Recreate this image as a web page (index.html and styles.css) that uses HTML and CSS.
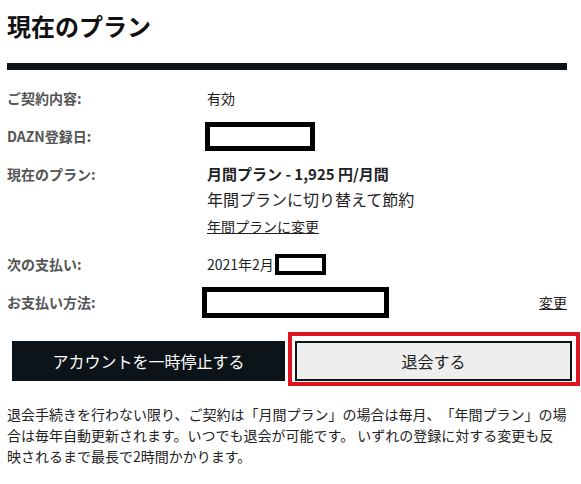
FILE: index.html
```html
<!DOCTYPE html>
<html lang="ja">
<head>
  <meta charset="UTF-8" />
  <meta name="viewport" content="width=device-width, initial-scale=1.0"/>
  <title>現在のプラン</title>
  <link rel="stylesheet" href="styles.css">
</head>
<body>
<div class="plan">
  <h1>現在のプラン</h1>
  <div class="bar"></div>

  <div class="row">
    <div class="label">ご契約内容:</div>
    <div class="value">有効</div>
  </div>

  <div class="row">
    <div class="label">DAZN登録日:</div>
    <div class="value"><span class="mask mask-date"></span></div>
  </div>

  <div class="row multi">
    <div class="label">現在のプラン:</div>
    <div class="value">
      <div class="plan-name">月間プラン - 1,925 円/月間</div>
      <div class="plan-hint">年間プランに切り替えて節約</div>
      <a href="#" class="plan-link">年間プランに変更</a>
    </div>
  </div>

  <div class="row">
    <div class="label">次の支払い:</div>
    <div class="value">2021年2月<span class="mask mask-day"></span></div>
  </div>

  <div class="row">
    <div class="label">お支払い方法:</div>
    <div class="value"><span class="mask mask-card"></span></div>
    <a href="#" class="change">変更</a>
  </div>

  <div class="actions">
    <button class="btn btn-pause">アカウントを一時停止する</button>
    <button class="btn btn-cancel">退会する<span class="highlight"></span></button>
  </div>

  <p class="note">退会手続きを行わない限り、ご契約は「月間プラン」の場合は毎月、「年間プラン」の場合は毎年自動更新されます。いつでも退会が可能です。 いずれの登録に対する変更も反映されるまで最長で2時間かかります。</p>
</div>
</body>
</html>
```

FILE: styles.css
```css
body {
  margin: 0;
  background-color: #fff;
  font-family: "Noto Sans CJK JP", "Noto Sans", sans-serif;
  color: #222;
}

.plan {
  padding: 10px 14px 0 7px;
}

h1 {
  margin: 0;
  font-size: 24px;
  line-height: 32px;
  font-weight: 700;
  color: #111;
}

.bar {
  height: 7px;
  margin-top: 21px;
  margin-bottom: 18px;
  background-color: #0d1419;
}

.row {
  display: flex;
  align-items: center;
  height: 20px;
  margin-bottom: 18px;
}

.row.multi {
  height: auto;
  align-items: flex-start;
}

.label {
  width: 200px;
  flex-shrink: 0;
  font-size: 14px;
  line-height: 20px;
  font-weight: 700;
  color: #555;
}

.value {
  flex: 1;
  display: flex;
  flex-direction: column;
  font-size: 15px;
  line-height: 20px;
}

.row:not(.multi) .value {
  flex-direction: row;
  align-items: center;
  font-size: 14px;
}

.plan-name {
  font-size: 15px;
  font-weight: 700;
}

.plan-hint {
  margin-top: 5px;
  font-size: 16px;
}

.plan-link {
  margin-top: 7px;
  font-size: 14px;
  line-height: 20px;
  color: #222;
  text-decoration: underline;
}

.mask {
  display: inline-block;
  box-sizing: border-box;
  border: 5px solid #000;
  background-color: #fff;
}

.mask-date {
  width: 110px;
  height: 29px;
  margin-left: -2px;
}

.mask-day {
  width: 51px;
  height: 21px;
  border-width: 4px;
  margin-left: 1px;
}

.mask-card {
  width: 187px;
  height: 31px;
  margin-left: -5px;
}

.change {
  font-size: 14px;
  color: #222;
  text-decoration: underline;
}

.actions {
  display: flex;
  gap: 10px;
  margin: 29px -5px 0 5px;
}

.btn {
  position: relative;
  flex: 1;
  height: 40px;
  font-family: inherit;
  font-size: 16px;
  border: none;
  padding: 0;
  cursor: pointer;
}

.btn-pause {
  background-color: #0d1419;
  color: #fff;
}

.btn-cancel {
  background-color: #eee;
  color: #222;
  border: 2px solid #0d1419;
}

.highlight {
  position: absolute;
  top: -11px;
  left: -9px;
  right: -10px;
  bottom: -7px;
  border: 4px solid #e0141e;
  pointer-events: none;
}

.note {
  margin: 23px 0 0 0;
  font-size: 14px;
  line-height: 21px;
  color: #222;
  text-spacing-trim: space-all;
}
```
